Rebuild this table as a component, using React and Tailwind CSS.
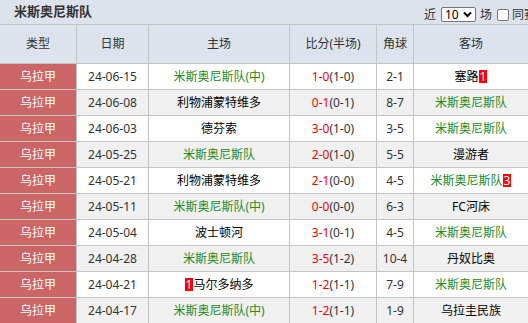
import React from "react";

const rows = [
  { date: "24-06-15", home: "米斯奥尼斯队(中)", homeMe: true, score: "1-0", half: "(1-0)", corner: "2-1", away: "塞路", awayBadge: "1" },
  { date: "24-06-08", home: "利物浦蒙特维多", score: "0-1", half: "(0-1)", corner: "8-7", away: "米斯奥尼斯队", awayMe: true },
  { date: "24-06-03", home: "德芬索", score: "3-0", half: "(1-0)", corner: "3-5", away: "米斯奥尼斯队", awayMe: true },
  { date: "24-05-25", home: "米斯奥尼斯队", homeMe: true, score: "2-0", half: "(1-0)", corner: "5-5", away: "漫游者" },
  { date: "24-05-21", home: "利物浦蒙特维多", score: "2-1", half: "(0-0)", corner: "4-5", away: "米斯奥尼斯队", awayMe: true, awayBadge: "3" },
  { date: "24-05-11", home: "米斯奥尼斯队(中)", homeMe: true, score: "0-0", half: "(0-0)", corner: "6-3", away: "FC河床" },
  { date: "24-05-04", home: "波士顿河", score: "3-1", half: "(0-1)", corner: "4-5", away: "米斯奥尼斯队", awayMe: true },
  { date: "24-04-28", home: "米斯奥尼斯队", homeMe: true, score: "3-5", half: "(1-2)", corner: "10-4", away: "丹奴比奥" },
  { date: "24-04-21", home: "马尔多纳多", homeBadge: "1", score: "1-2", half: "(1-1)", corner: "7-9", away: "米斯奥尼斯队", awayMe: true },
  { date: "24-04-17", home: "米斯奥尼斯队(中)", homeMe: true, score: "1-2", half: "(1-1)", corner: "1-9", away: "乌拉圭民族" },
];

const Badge = ({ n }) => (
  <span className="inline-block bg-[#ff0000] text-white leading-[13px] px-[1px]">{n}</span>
);

const App = () => {
  return (
    <div
      className="w-[528px] h-[323px] overflow-hidden text-[12px] text-[#333]"
      style={{ fontFamily: '"Noto Sans", "Noto Sans CJK SC", sans-serif' }}
    >
      <div className="h-[24px] bg-[#dce3ec] flex items-center justify-between pl-[14px] overflow-hidden">
        <span className="font-bold text-[13px] text-[#333]">米斯奥尼斯队</span>
        <div className="flex items-center whitespace-nowrap mt-[5px] -mr-[8px]">
          <span>近</span>
          <div className="ml-[5px] w-[35px] h-[15px] bg-white border border-[#767676] rounded-[2px] flex items-center justify-between px-[3px] text-black">
            <span>10</span>
            <svg width="9" height="7" viewBox="0 0 9 7">
              <path d="M1 1.5 L4.5 5 L8 1.5" stroke="#000" strokeWidth="2" fill="none" />
            </svg>
          </div>
          <span className="ml-[4px]">场</span>
          <span className="ml-[5px] inline-block w-[12px] h-[12px] border border-[#767676] rounded-[2px] bg-white" />
          <span className="ml-[3px]">同赛</span>
        </div>
      </div>
      <div className="grid grid-cols-[76px_71px_140px_86px_36px_114px] auto-rows-[25px] grid-rows-[38px] gap-px bg-[#c4c4c4] border-t border-[#c4c4c4]">
        {["类型", "日期", "主场", "比分(半场)", "角球", "客场"].map((h) => (
          <div key={h} className="bg-[#dce3ec] flex items-center justify-center">
            {h}
          </div>
        ))}
        {rows.map((r, i) => {
          const bg = i % 2 === 1 ? "bg-[#f0f0f0]" : "bg-white";
          return (
            <React.Fragment key={r.date}>
              <div className="bg-[#cc6565] text-white flex items-center justify-center">乌拉甲</div>
              <div className={`${bg} flex items-center justify-center`}>{r.date}</div>
              <div className={`${bg} flex items-center justify-center whitespace-nowrap ${r.homeMe ? "text-[#228b22]" : "text-black"}`}>
                {r.homeBadge && <Badge n={r.homeBadge} />}
                {r.home}
              </div>
              <div className={`${bg} flex items-center justify-center`}>
                <span className="text-[#ff0000]">{r.score}</span>
                <span>{r.half}</span>
              </div>
              <div className={`${bg} flex items-center justify-center`}>{r.corner}</div>
              <div className={`${bg} flex items-center justify-center whitespace-nowrap ${r.awayMe ? "text-[#228b22]" : "text-black"}`}>
                {r.away}
                {r.awayBadge && <Badge n={r.awayBadge} />}
              </div>
            </React.Fragment>
          );
        })}
      </div>
    </div>
  );
};

export default App;
